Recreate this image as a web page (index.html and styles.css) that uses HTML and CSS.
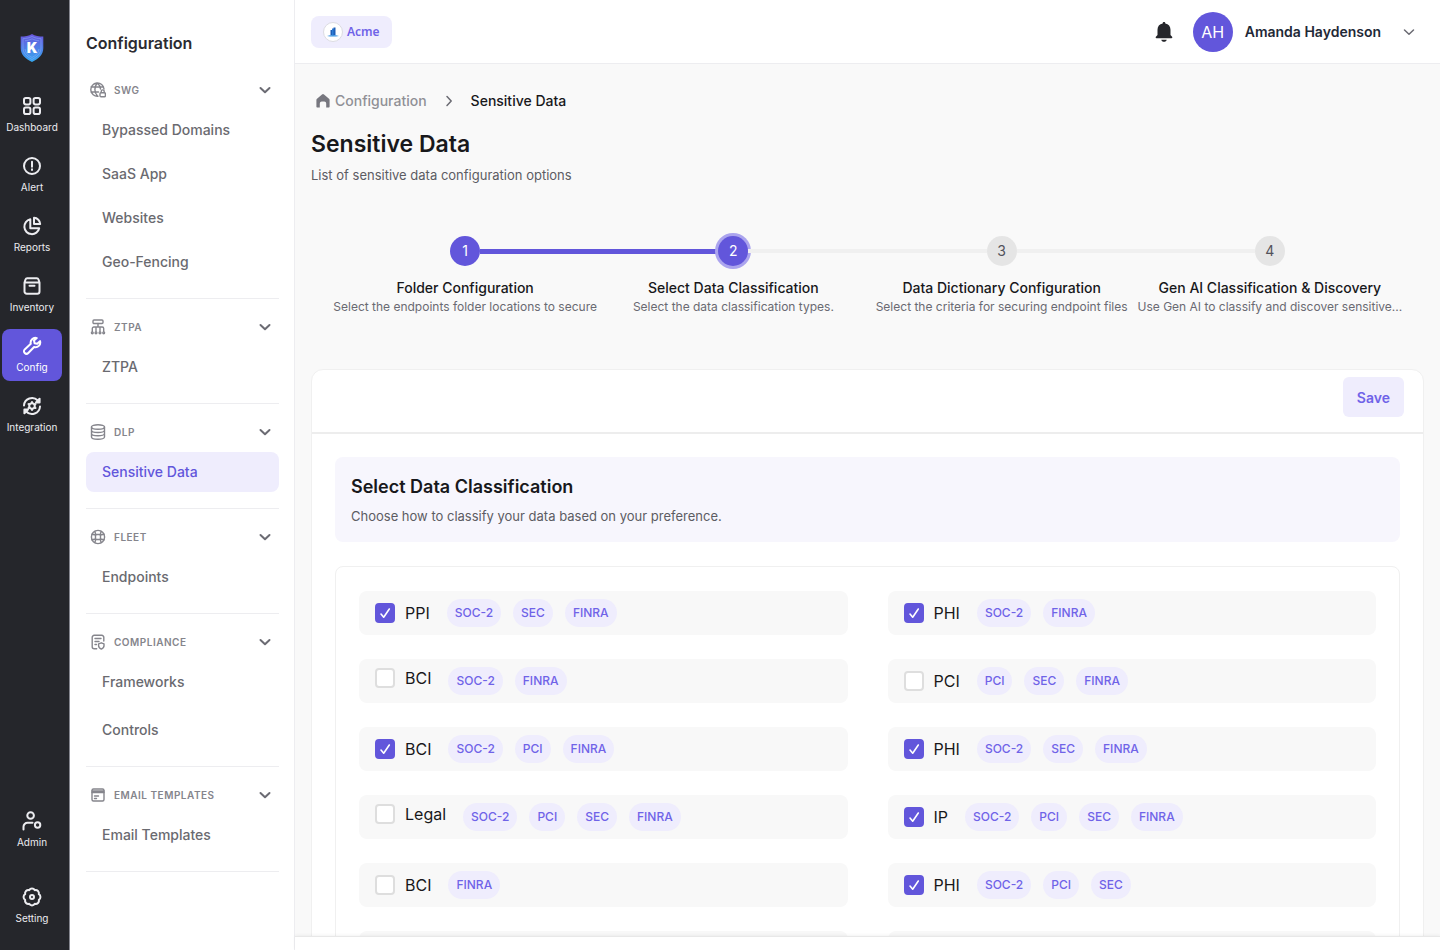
FILE: index.html
```html
<!DOCTYPE html>
<html lang="en">
<head>
  <meta charset="UTF-8">
  <meta name="viewport" content="width=device-width, initial-scale=1.0">
  <title>Sensitive Data - Configuration</title>
  <link rel="stylesheet" href="styles.css">
</head>
<body>

<!-- shared icons -->
<svg class="sprite" aria-hidden="true">
  <symbol id="chevron" viewBox="0 0 12 12"><path d="M1.5 4 6 8.2 10.5 4"/></symbol>
</svg>

<nav class="rail">
  <a class="logo" href="#" aria-label="Home">
    <svg width="24" height="28" viewBox="0 0 24 28">
      <defs>
        <linearGradient id="shield" x1="0" y1="0" x2="0" y2="1">
          <stop offset="0" stop-color="#6a55dc"/>
          <stop offset="1" stop-color="#35a8f0"/>
        </linearGradient>
      </defs>
      <path fill="url(#shield)" d="M12 0c3 2 7 2.500 11.300 2.500V14c0 7-5 11-11.300 14C5.700 25 .7 21 .7 14V2.500C5 2.500 9 2 12 0z"/>
      <path fill="none" stroke="#8fb4ff" stroke-width=".6" opacity=".8" d="M12 2.500c3 1.500 5.500 2 9 2.200V14c0 5-3.500 8.500-9 11.500C6.500 22.500 3 19 3 14V4.700c3.500-.2 6-.7 9-2.200zM12 4.800c2.500 1.200 4.500 1.700 7 2M12 4.800c-2.500 1.200-4.500 1.700-7 2M5 15c.5 4 3 6.500 7 8.500 4-2 6.500-4.500 7-8.500"/>
      <text x="12" y="19" text-anchor="middle" class="logo-letter">K</text>
    </svg>
  </a>

  <div class="rail-group">
    <a class="rail-item" href="#">
      <svg class="rail-icon" viewBox="0 0 20 20"><rect x="2" y="2" width="6.400" height="6.400" rx="1.800"/><rect x="11.600" y="2" width="6.400" height="6.400" rx="1.800"/><rect x="2" y="11.600" width="6.400" height="6.400" rx="1.800"/><rect x="11.600" y="11.600" width="6.400" height="6.400" rx="1.800"/></svg>
      <span>Dashboard</span>
    </a>
    <a class="rail-item" href="#">
      <svg class="rail-icon" viewBox="0 0 20 20"><circle cx="10" cy="10" r="8"/><path d="M10 5.800v5M10 13.300v.6"/></svg>
      <span>Alert</span>
    </a>
    <a class="rail-item" href="#">
      <svg class="rail-icon" viewBox="0 0 20 20"><path d="M8.300 3.300a7.500 7.500 0 1 0 8.900 8.900H8.300z"/><path d="M12 1.800V8h6.200A6.500 6.500 0 0 0 12 1.800z"/></svg>
      <span>Reports</span>
    </a>
    <a class="rail-item" href="#">
      <svg class="rail-icon" viewBox="0 0 20 20"><path d="M2.500 6.500v9a2.200 2.200 0 0 0 2.200 2.200h10.600a2.200 2.200 0 0 0 2.200-2.200v-9zM2.500 6.500l1-3a1.800 1.800 0 0 1 1.700-1.200h9.600a1.800 1.800 0 0 1 1.700 1.200l1 3M7.500 9.800h5"/></svg>
      <span>Inventory</span>
    </a>
    <a class="rail-item active" href="#" aria-current="page">
      <svg class="rail-icon" viewBox="0 0 20 20"><path d="M14.800 2.100a4.700 4.700 0 0 0-6 5.700L2.700 13.400a2.400 2.400 0 0 0 3.600 3.600l5.800-6a4.700 4.700 0 0 0 5.900-5.900l-2.800 2.700-2.600-.6-.6-2.600z"/></svg>
      <span>Config</span>
    </a>
    <a class="rail-item" href="#">
      <svg class="rail-icon" viewBox="0 0 20 20"><circle cx="10" cy="10" r="2.800"/><path d="M10 6v1M10 13v1M6.500 8l.8.500M12.700 11.500l.8.500M6.500 12l.8-.5M12.700 8.500l.8-.5M2 9.500A8 8 0 0 1 15.800 4.500M18 10.500A8 8 0 0 1 4.200 15.500"/><path fill="currentColor" d="M17.600 2.800v3.600H14zM2.400 17.200v-3.600H6z"/></svg>
      <span>Integration</span>
    </a>
  </div>

  <div class="rail-group bottom">
    <a class="rail-item" href="#">
      <svg class="rail-icon" viewBox="0 0 20 20"><circle cx="8.600" cy="4.500" r="3.300"/><path d="M1.500 18.500v-2.700a4 4 0 0 1 4-4h5"/><circle cx="15.600" cy="14" r="2.700"/></svg>
      <span>Admin</span>
    </a>
    <a class="rail-item" href="#">
      <svg class="rail-icon" viewBox="0 0 20 20"><path d="M16.840 12.830a3.300 3.300 0 0 1-4.010 4.010 3.300 3.300 0 0 1-5.660 0 3.300 3.300 0 0 1-4.010-4.010 3.300 3.300 0 0 1 0-5.660 3.300 3.300 0 0 1 4.010-4.010 3.300 3.300 0 0 1 5.660 0 3.300 3.300 0 0 1 4.010 4.010 3.300 3.300 0 0 1 0 5.660z"/><circle cx="10" cy="10" r="2"/></svg>
      <span>Setting</span>
    </a>
  </div>
</nav>

<aside class="sidebar">
  <h2 class="sidebar-title">Configuration</h2>

  <section class="menu">
    <button class="menu-head" type="button">
      <svg class="menu-icon" viewBox="0 0 16 16"><path d="M14 7A6.600 6.600 0 1 0 8 14.200M1 5h12.500M1 10h7.500M7.500 1C4 4.500 4 10.500 7.500 14M7.500 1c2 2 3 4 3 6"/><rect x="10" y="10.800" width="5.400" height="4" rx="1"/><path d="M11.200 10.500V9.400a1.500 1.500 0 0 1 3 0v1.100"/></svg>
      <span>SWG</span>
      <svg class="chevron"><use href="#chevron"/></svg>
    </button>
    <a class="menu-link" href="#">Bypassed Domains</a>
    <a class="menu-link" href="#">SaaS App</a>
    <a class="menu-link" href="#">Websites</a>
    <a class="menu-link" href="#">Geo-Fencing</a>
  </section>

  <section class="menu">
    <button class="menu-head" type="button">
      <svg class="menu-icon" viewBox="0 0 16 16"><rect x="3" y="1" width="10" height="3.500" rx="1"/><path d="M8 4.500V8M2.300 12.500v-3A1.500 1.500 0 0 1 3.800 8h8.400a1.500 1.500 0 0 1 1.500 1.500v3M6 8v4.500M10 8v4.500"/><circle cx="2.300" cy="13.800" r=".9"/><circle cx="6" cy="13.800" r=".9"/><circle cx="10" cy="13.800" r=".9"/><circle cx="13.700" cy="13.800" r=".9"/></svg>
      <span>ZTPA</span>
      <svg class="chevron"><use href="#chevron"/></svg>
    </button>
    <a class="menu-link" href="#">ZTPA</a>
  </section>

  <section class="menu">
    <button class="menu-head" type="button">
      <svg class="menu-icon" viewBox="0 0 16 16"><ellipse cx="8" cy="3" rx="6.500" ry="2.200"/><path d="M1.500 3v10c0 1.200 2.900 2.200 6.500 2.200s6.500-1 6.500-2.200V3M1.500 6.300c0 1.200 2.900 2.200 6.500 2.200s6.500-1 6.500-2.200M1.500 9.600c0 1.200 2.900 2.200 6.500 2.200s6.500-1 6.500-2.200"/></svg>
      <span>DLP</span>
      <svg class="chevron"><use href="#chevron"/></svg>
    </button>
    <a class="menu-link active" href="#" aria-current="page">Sensitive Data</a>
  </section>

  <section class="menu">
    <button class="menu-head" type="button">
      <svg class="menu-icon" viewBox="0 0 16 16"><circle cx="8" cy="8" r="6.600"/><rect x="5.500" y="5.500" width="5" height="5" rx="1.200"/><path d="M5.800 5.500 4.800 2.500M10.200 5.500l1-3M5.800 10.500l-1 3M10.200 10.500l1 3M5.500 6 2 5.200M5.500 10 2 10.800M10.500 6l3.500-.8M10.500 10l3.500.8"/></svg>
      <span>FLEET</span>
      <svg class="chevron"><use href="#chevron"/></svg>
    </button>
    <a class="menu-link" href="#">Endpoints</a>
  </section>

  <section class="menu spaced">
    <button class="menu-head" type="button">
      <svg class="menu-icon" viewBox="0 0 16 16"><path d="M13.800 7V3.300a2 2 0 0 0-2-2H4.200a2 2 0 0 0-2 2v9.400a2 2 0 0 0 2 2h2.500M5 4.500h6M5 7.500h4M5 10.500h1.500"/><path d="M11.300 8.800l2.700 1v2c0 1.700-1.200 2.700-2.700 3.300-1.500-.6-2.700-1.600-2.700-3.300v-2z"/></svg>
      <span>COMPLIANCE</span>
      <svg class="chevron"><use href="#chevron"/></svg>
    </button>
    <a class="menu-link" href="#">Frameworks</a>
    <a class="menu-link" href="#">Controls</a>
  </section>

  <section class="menu">
    <button class="menu-head" type="button">
      <svg class="menu-icon" viewBox="0 0 16 16"><rect x="2" y="2" width="12" height="12" rx="1.500"/><path d="M2 4h12M2 5.500h12M4.500 9h4M4.500 11.500h2"/></svg>
      <span>EMAIL TEMPLATES</span>
      <svg class="chevron"><use href="#chevron"/></svg>
    </button>
    <a class="menu-link" href="#">Email Templates</a>
  </section>
</aside>

<div class="page">
  <header class="topbar">
    <button class="tenant" type="button">
      <span class="tenant-logo">
        <svg width="12" height="12" viewBox="0 0 12 12"><path fill="#2f7fd6" d="M5 2.500h2V9H5z"/><path fill="#1d5fb8" d="M6.500 1.500h2V9h-2zM3.500 4H5v5H3.500z"/><path fill="#3f95e0" d="M0 10c4-1.400 8-1.400 12 0-4 .7-8 .7-12 0z"/></svg>
      </span>
      Acme
    </button>
    <div class="account">
      <button class="bell" type="button" aria-label="Notifications">
        <svg width="18" height="22" viewBox="0 0 18 22"><path fill="#25262b" d="M9 1c.8 0 1.300.5 1.300 1.200v.3c3.300.6 5.200 3 5.200 6.200V14l1.600 1.800c.5.600.2 1.400-.6 1.400H1.500c-.8 0-1.100-.8-.6-1.400L2.500 14V8.700c0-3.200 1.900-5.600 5.200-6.200v-.3C7.700 1.500 8.200 1 9 1zM6.300 18.700h5.400c-.3 1.400-1.300 2.100-2.700 2.100s-2.400-.7-2.700-2.100z"/></svg>
      </button>
      <button class="user" type="button">
        <span class="avatar">AH</span>
        <span class="user-name">Amanda Haydenson</span>
        <svg class="chevron"><use href="#chevron"/></svg>
      </button>
    </div>
  </header>

  <main class="content">
    <nav class="breadcrumb" aria-label="Breadcrumb">
      <a href="#">
        <svg width="14" height="14" viewBox="0 0 14 14"><path fill="#77777f" d="M6 .5a1.500 1.500 0 0 1 2 0l5 4.200c.4.300.6.8.6 1.300v6.500c0 .6-.4 1-1 1h-2.400V9.500a2 2 0 0 0-2-2H5.800a2 2 0 0 0-2 2v4H1.400c-.6 0-1-.4-1-1V6c0-.5.2-1 .6-1.300z"/></svg>
        Configuration
      </a>
      <svg class="chevron right"><use href="#chevron"/></svg>
      <span>Sensitive Data</span>
    </nav>
    <h1 class="title">Sensitive Data</h1>
    <p class="subtitle">List of sensitive data configuration options</p>

    <ol class="stepper">
      <li class="step done">
        <span class="step-dot">1</span>
        <strong>Folder Configuration</strong>
        <small>Select the endpoints folder locations to secure</small>
      </li>
      <li class="step current" aria-current="step">
        <span class="step-dot">2</span>
        <strong>Select Data Classification</strong>
        <small>Select the data classification types.</small>
      </li>
      <li class="step">
        <span class="step-dot">3</span>
        <strong>Data Dictionary Configuration</strong>
        <small>Select the criteria for securing endpoint files</small>
      </li>
      <li class="step">
        <span class="step-dot">4</span>
        <strong>Gen AI Classification &amp; Discovery</strong>
        <small>Use Gen AI to classify and discover sensitive...</small>
      </li>
    </ol>

    <form class="card">
      <div class="card-head">
        <button class="save" type="submit">Save</button>
      </div>
      <div class="card-body">
        <div class="banner">
          <h2>Select Data Classification</h2>
          <p>Choose how to classify your data based on your preference.</p>
        </div>

        <div class="options">
          <div class="option">
            <label><input type="checkbox" checked>PPI</label>
            <span class="tag">SOC-2</span><span class="tag">SEC</span><span class="tag">FINRA</span>
          </div>
          <div class="option">
            <label><input type="checkbox" checked>PHI</label>
            <span class="tag">SOC-2</span><span class="tag">FINRA</span>
          </div>
          <div class="option top">
            <label><input type="checkbox">BCI</label>
            <span class="tag">SOC-2</span><span class="tag">FINRA</span>
          </div>
          <div class="option">
            <label><input type="checkbox">PCI</label>
            <span class="tag">PCI</span><span class="tag">SEC</span><span class="tag">FINRA</span>
          </div>
          <div class="option">
            <label><input type="checkbox" checked>BCI</label>
            <span class="tag">SOC-2</span><span class="tag">PCI</span><span class="tag">FINRA</span>
          </div>
          <div class="option">
            <label><input type="checkbox" checked>PHI</label>
            <span class="tag">SOC-2</span><span class="tag">SEC</span><span class="tag">FINRA</span>
          </div>
          <div class="option top">
            <label><input type="checkbox">Legal</label>
            <span class="tag">SOC-2</span><span class="tag">PCI</span><span class="tag">SEC</span><span class="tag">FINRA</span>
          </div>
          <div class="option">
            <label><input type="checkbox" checked>IP</label>
            <span class="tag">SOC-2</span><span class="tag">PCI</span><span class="tag">SEC</span><span class="tag">FINRA</span>
          </div>
          <div class="option">
            <label><input type="checkbox">BCI</label>
            <span class="tag">FINRA</span>
          </div>
          <div class="option">
            <label><input type="checkbox" checked>PHI</label>
            <span class="tag">SOC-2</span><span class="tag">PCI</span><span class="tag">SEC</span>
          </div>
          <div class="option"></div>
          <div class="option"></div>
        </div>
      </div>
    </form>
  </main>

  <footer class="footer"></footer>
</div>

</body>
</html>
```
FILE: styles.css
```css
* {
  box-sizing: border-box;
}

body {
  margin: 0;
  height: 100vh;
  display: flex;
  overflow: hidden;
  font-family: Inter, "Liberation Sans", sans-serif;
  font-size: 14px;
  color: #18181b;
  background: #fff;
}

h1, h2, p, ol {
  margin: 0;
  padding: 0;
}

a {
  color: inherit;
  text-decoration: none;
}

button {
  border: none;
  background: none;
  padding: 0;
  font: inherit;
  color: inherit;
  cursor: pointer;
}

.sprite {
  display: none;
}

.chevron {
  width: 12px;
  height: 12px;
  fill: none;
  stroke: #6b6b73;
  stroke-width: 2;
  stroke-linecap: round;
  stroke-linejoin: round;
}

/* icon rail */
.rail {
  flex: none;
  width: 70px;
  display: flex;
  flex-direction: column;
  padding: 34px 7px 18px 2px;
  background: #25262b;
  border-right: 1px solid #85868f;
}

.logo {
  align-self: center;
  height: 55px;
}

.logo-letter {
  fill: #fff;
  font-size: 14px;
  font-weight: 900;
}

.rail-group {
  display: flex;
  flex-direction: column;
  gap: 8px;
}

.rail-group.bottom {
  margin-top: auto;
  gap: 24px;
}

.rail-item {
  height: 52px;
  display: flex;
  flex-direction: column;
  align-items: center;
  justify-content: center;
  gap: 4px;
  border-radius: 8px;
  font-size: 10px;
  line-height: 14px;
  color: #ececf0;
}

.rail-item.active {
  background: #6256db;
  color: #fff;
}

.rail-icon {
  width: 20px;
  height: 20px;
  fill: none;
  stroke: currentColor;
  stroke-width: 2;
  stroke-linecap: round;
  stroke-linejoin: round;
}

/* configuration menu */
.sidebar {
  flex: none;
  width: 225px;
  padding: 31px 15px 31px 16px;
  border-right: 1px solid #ededf0;
}

.sidebar-title {
  margin-bottom: 7px;
  font-size: 16px;
  font-weight: 600;
  line-height: 24px;
  color: #2b2b31;
}

.menu {
  display: flex;
  flex-direction: column;
  gap: 4px;
  padding: 8px 0 16px;
  border-bottom: 1px solid #ededf0;
}

.menu.spaced {
  gap: 8px;
}

.menu-head {
  display: flex;
  align-items: center;
  gap: 8px;
  height: 40px;
  margin-bottom: -4px;
  padding: 0 8px 0 4px;
  font-size: 10px;
  font-weight: 600;
  letter-spacing: 0.5px;
  color: #85858c;
}

.menu.spaced .menu-head {
  margin-bottom: -8px;
}

.menu-head .chevron {
  margin-left: auto;
}

.menu-icon {
  width: 16px;
  height: 16px;
  fill: none;
  stroke: #85858c;
  stroke-width: 1.4;
  stroke-linecap: round;
  stroke-linejoin: round;
}

.menu-link {
  padding: 0 16px;
  border-radius: 8px;
  font-size: 14px;
  font-weight: 500;
  line-height: 40px;
  color: #6a6a70;
}

.menu-link.active {
  background: #efedfd;
  color: #6256db;
}

/* top bar */
.page {
  flex: 1;
  min-width: 0;
  display: flex;
  flex-direction: column;
}

.topbar {
  flex: none;
  height: 64px;
  display: flex;
  align-items: center;
  justify-content: space-between;
  padding: 0 23px 0 16px;
  border-bottom: 1px solid #ededf0;
}

.tenant {
  display: flex;
  align-items: center;
  gap: 4px;
  height: 32px;
  padding: 0 12px;
  border-radius: 8px;
  background: #efedfd;
  font-family: "Noto Sans", sans-serif;
  font-size: 12px;
  font-weight: 600;
  color: #6f63e8;
}

.tenant-logo {
  width: 20px;
  height: 20px;
  display: grid;
  place-items: center;
  border: 1px solid #dcdce2;
  border-radius: 50%;
  background: #fff;
}

.account,
.user {
  display: flex;
  align-items: center;
}

.account {
  gap: 20px;
}

.bell svg {
  display: block;
}

.user {
  gap: 12px;
}

.user .chevron {
  margin: 0 2px 0 10px;
  stroke-width: 1.5;
}

.avatar {
  width: 40px;
  height: 40px;
  border-radius: 50%;
  background: #6256db;
  color: #fff;
  font-size: 16px;
  line-height: 40px;
  text-align: center;
}

.user-name {
  font-weight: 600;
  color: #1f2937;
}

/* content */
.content {
  flex: 1;
  min-height: 0;
  padding: 25px 16px 0;
  overflow-y: auto;
  scrollbar-width: none;
  background: #f9f9f9;
}

.breadcrumb {
  display: flex;
  align-items: center;
  gap: 16px;
  padding-left: 5px;
  font-weight: 500;
  line-height: 24px;
}

.breadcrumb a {
  display: flex;
  align-items: center;
  gap: 5px;
  color: #909096;
}

.chevron.right {
  transform: rotate(-90deg);
  stroke-width: 1.5;
}

.title {
  margin-top: 15px;
  font-size: 23px;
  font-weight: 600;
  line-height: 32px;
}

.subtitle {
  margin-top: 5px;
  font-size: 13px;
  line-height: 20px;
  color: #5c5c63;
}

.stepper {
  display: flex;
  margin-top: 51px;
  padding: 0 20px;
  list-style: none;
}

.step {
  position: relative;
  flex: 1;
  min-width: 0;
  display: flex;
  flex-direction: column;
  align-items: center;
}

/* line to the next step */
.step:not(:last-child)::after {
  content: "";
  position: absolute;
  top: 13px;
  left: calc(50% + 15px);
  width: calc(100% - 30px);
  height: 4px;
  background: #f0f0f0;
}

.step.done::after {
  height: 5px;
  background: #6256db;
}

.step-dot {
  width: 30px;
  height: 30px;
  border-radius: 50%;
  background: #e5e5e5;
  color: #52525b;
  line-height: 30px;
  text-align: center;
}

.step.done .step-dot,
.step.current .step-dot {
  background: #6256db;
  color: #fff;
}

.step.current .step-dot {
  box-shadow: 0 0 0 3px #aba4ee;
}

.step strong {
  margin-top: 12px;
  font-weight: 500;
  line-height: 20px;
}

.step small {
  font-size: 12px;
  line-height: 18px;
  white-space: nowrap;
  color: #6a6a72;
}

.card {
  margin-top: 53px;
  border: 1px solid #f0f0f0;
  border-radius: 12px;
  background: #fff;
}

.card-head {
  display: flex;
  justify-content: flex-end;
  padding: 7px 19px 15px;
  border-bottom: 2px solid #ededed;
}

.save {
  height: 40px;
  padding: 0 14px;
  border-radius: 6px;
  background: #efedfd;
  color: #6f63e8;
  font-weight: 600;
}

.card-body {
  display: flex;
  flex-direction: column;
  gap: 24px;
  padding: 23px;
}

.banner {
  padding: 16px;
  border-radius: 8px;
  background: #f7f6fd;
}

.banner h2 {
  font-size: 18px;
  font-weight: 600;
  line-height: 28px;
}

.banner p {
  margin-top: 5px;
  font-size: 13px;
  line-height: 20px;
  color: #5c5c63;
}

.options {
  display: grid;
  grid-template-columns: 1fr 1fr;
  gap: 24px 40px;
  padding: 24px 23px;
  border: 1px solid #f0f0f0;
  border-radius: 8px;
}

.option {
  display: flex;
  align-items: center;
  gap: 12px;
  min-height: 44px;
  padding: 8px 16px;
  border-radius: 8px;
  background: #f8f8f8;
}

.option.top {
  align-items: flex-start;
}

.option label {
  display: flex;
  align-items: center;
  gap: 10px;
  margin-right: 5px;
  font-size: 16px;
  line-height: 22px;
}

.option input {
  appearance: none;
  width: 20px;
  height: 20px;
  margin: 0;
  border: 2px solid #dedede;
  border-radius: 4px;
  background: #fff;
}

.option input:checked {
  border-color: #6256db;
  background: #6256db url("data:image/svg+xml,%3Csvg xmlns='http://www.w3.org/2000/svg' viewBox='0 0 16 16' fill='none' stroke='white' stroke-width='1.6' stroke-linecap='round' stroke-linejoin='round'%3E%3Cpath d='M4 9l2.700 3.200L12.300 4'/%3E%3C/svg%3E") center / 16px no-repeat;
}

.tag {
  padding: 0 8px;
  border-radius: 14px;
  background: #efedfd;
  color: #6f63e8;
  font-size: 12px;
  font-weight: 500;
  line-height: 28px;
}

.footer {
  flex: none;
  height: 14px;
  border-top: 1px solid #e8e8e8;
  box-shadow: 0 -1px 3px rgba(0, 0, 0, 0.05);
  background: #fff;
}
```
